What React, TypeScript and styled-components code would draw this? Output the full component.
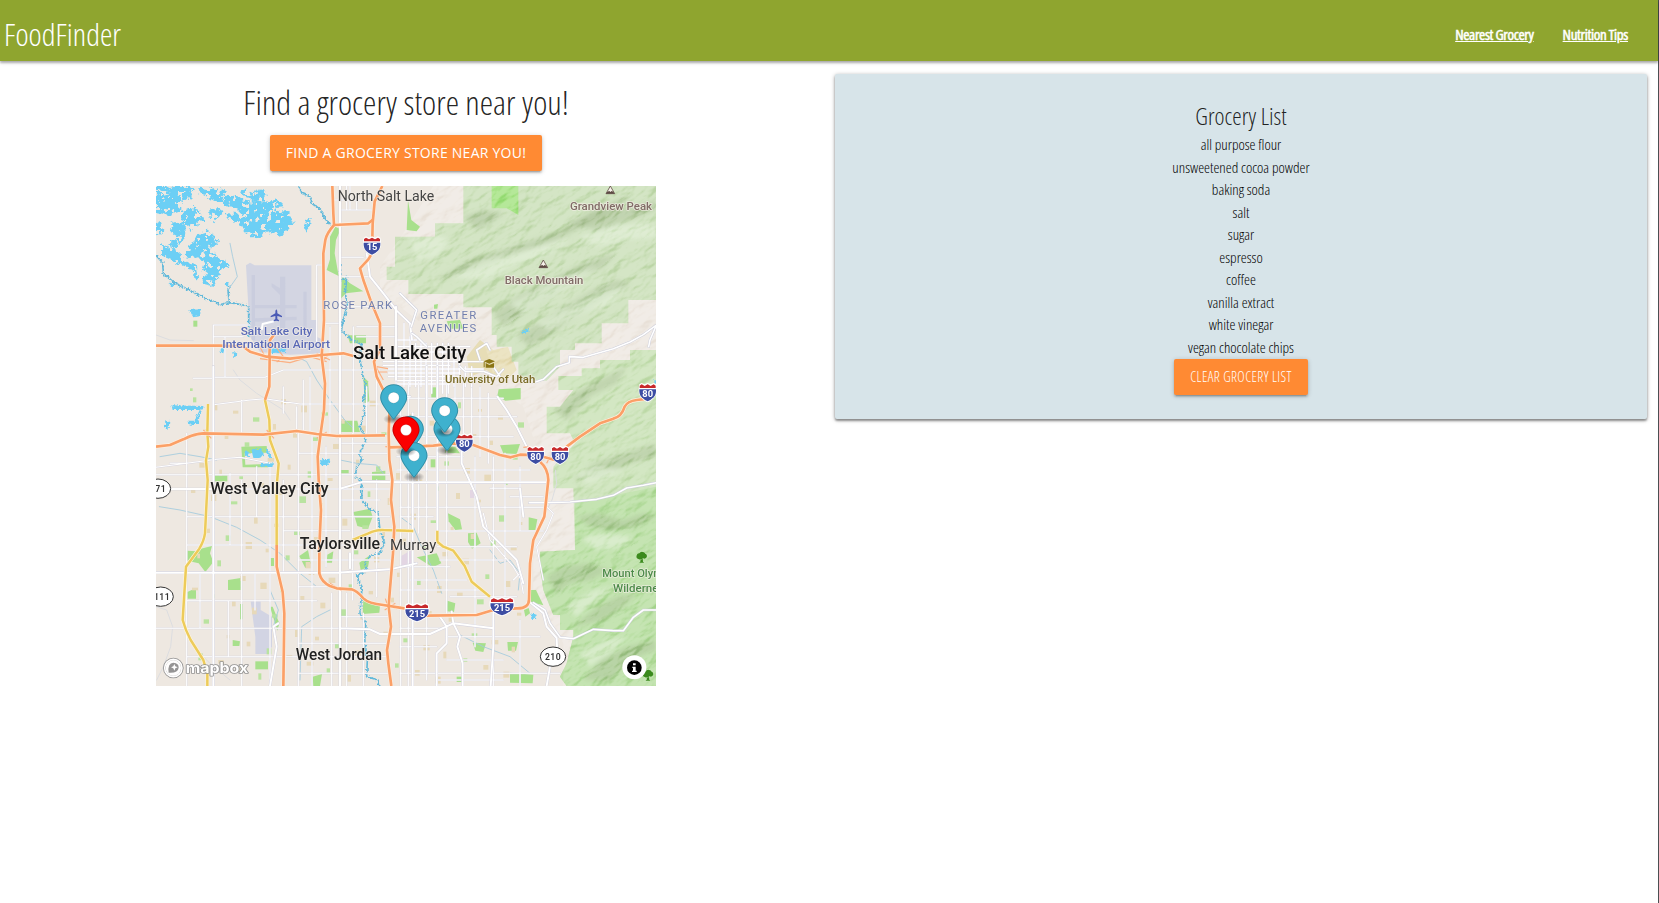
import React from "react";
import styled, { createGlobalStyle } from "styled-components";

const GlobalStyle = createGlobalStyle`
  * { box-sizing: border-box; }
  html, body { margin: 0; padding: 0; }
  body {
    background: #fff;
    color: #000;
    font-family: "Open Sans", "Noto Sans", sans-serif;
    font-stretch: 75%;
    font-weight: 300;
    font-size: 15px;
    line-height: 22.5px;
  }
`;

const Page = styled.div`
  min-height: 903px;
  border-right: 1px solid #4b4f52;
`;
const NavBar = styled.nav`
  display: flex;
  align-items: center;
  justify-content: space-between;
  height: 61px;
  padding: 8px 30px 0 4px;
  background: #8fa52f;
  box-shadow: 0 2px 2px rgba(0, 0, 0, 0.2), 0 1px 4px rgba(0, 0, 0, 0.25);
`;
const Brand = styled.a`
  padding-bottom: 1px;
  color: #fff;
  font-size: 31.4px;
  line-height: 52px;
`;
const NavLinks = styled.div`
  display: flex;
  gap: 29px;
`;
const NavLink = styled.a`
  color: #fff;
  font-size: 15px;
  font-weight: 500;
  letter-spacing: -0.35px;
  text-decoration: underline;
  -webkit-text-stroke: 0.5px #fff;
`;
const Columns = styled.main`
  display: grid;
  grid-template-columns: 812px 812px;
  column-gap: 23px;
  align-items: start;
  padding-top: 13px;
`;
const Finder = styled.section`
  display: flex;
  flex-direction: column;
  align-items: center;
`;
const Title = styled.h1`
  margin: 8px 0 13px;
  color: rgba(0, 0, 0, 0.87);
  font-size: 33.8px;
  font-weight: 300;
  line-height: 40px;
  white-space: nowrap;
`;
const Button = styled.button<{ $wide?: boolean }>`
  height: 36px;
  width: ${(p) => (p.$wide ? 272 : 134)}px;
  padding: 0;
  border: 0;
  border-radius: 2px;
  background: #ff8a33;
  color: #fff;
  font-family: "Open Sans", "Noto Sans", sans-serif;
  font-stretch: ${(p) => (p.$wide ? "100%" : "75%")};
  font-weight: ${(p) => (p.$wide ? 400 : 350)};
  font-size: 14px;
  line-height: 36px;
  letter-spacing: ${(p) => (p.$wide ? 0.25 : 0.4)}px;
  text-transform: uppercase;
  white-space: nowrap;
  box-shadow: 0 2px 2px rgba(0, 0, 0, 0.14), 0 3px 1px -2px rgba(0, 0, 0, 0.12), 0 1px 5px rgba(0, 0, 0, 0.2);
`;
const MapFrame = styled.div`
  width: 500px;
  height: 500px;
  margin-top: 15px;
  overflow: hidden;
  svg { display: block; }
`;
const Panel = styled.section`
  display: flex;
  flex-direction: column;
  align-items: center;
  height: 345px;
  padding-top: 25px;
  border-radius: 2px;
  background: #d7e4e9;
  box-shadow: 0 2px 2px rgba(0, 0, 0, 0.3), 0 1px 4px rgba(0, 0, 0, 0.35);
`;
const PanelTitle = styled.h2`
  margin: 0;
  color: rgba(0, 0, 0, 0.87);
  font-size: 23.8px;
  font-weight: 300;
  line-height: 34px;
`;
const List = styled.ul`
  margin: 0 0 1px;
  padding: 0;
  list-style: none;
  text-align: center;
`;
const Item = styled.li`
  line-height: 22.5px;
`;

const groceries = [
  "all purpose flour",
  "unsweetened cocoa powder",
  "baking soda",
  "salt",
  "sugar",
  "espresso",
  "coffee",
  "vanilla extract",
  "white vinegar",
  "vegan chocolate chips",
];

/* Map drawing: three units to one pixel. */
const FOREST_N =
  "M940 18V130H855V170H735V260H710V300H775V342H940V382H1025V465H1040V500H1085V545H1105V600L1190 602L1230 560V510H1275V490H1355V430H1435V360H1518V18Z";
const FOREST_E =
  "M1518 510H1440V540H1350V565H1295V588H1225V630H1270L1230 680H1190V760H1260L1275 790L1210 860V925H1270L1275 1110L1170 1115V1160L1180 1230L1210 1305H1230V1350H1270V1370L1250 1450L1230 1490L1250 1518H1518Z";
const FOREST_SE =
  "M1518 920L1275 970V1110L1170 1115V1160L1180 1230L1210 1305H1230V1350H1270V1370L1250 1450L1230 1490L1250 1518H1518Z";

const lake = [
  "M18 34L50 40L62 24L92 18H124L132 40L108 62L84 70L98 90L72 100L54 108L18 100Z",
  "M18 18H60L66 28L50 36L18 28Z",
  "M142 22L186 30L206 24L228 38L214 52L226 70L204 66L176 50L152 44Z",
  "M104 88L138 80L150 98L162 118L142 134L122 148L100 136L92 118Z",
  "M64 128L92 124L108 146L104 170L92 196L76 170L64 156Z",
  "M18 122L34 128L40 154L18 172Z",
  "M62 176L80 182L88 200L66 204L60 190Z",
  "M178 88L206 84L222 96L206 108L196 124L178 112Z",
  "M222 46L254 44L276 62L304 68L338 64L372 78L386 98L418 96L432 130L414 150L396 168L346 152L334 170L306 172L276 144L262 120L280 112L268 90L240 76L222 84Z",
  "M234 100L258 102L268 118L252 128L232 118Z",
  "M282 26L306 38L336 24L350 44L340 60L312 68L294 50L276 44Z",
  "M352 60L384 62L402 82L380 84L356 74Z",
  "M470 116L482 112L480 146L470 156L462 142Z",
  "M36 190L66 206L88 222L98 238L120 250L138 256L142 300L130 290L128 270L102 264L80 248L52 236L36 222Z",
  "M110 198L134 184L148 156L170 152L192 166L204 188L182 202L178 220L200 218L206 240L232 236L236 260L212 266L206 290L188 318L162 312L156 300L170 282L158 272L164 246L138 232L116 238L104 222Z",
];
const water = [
  "M58 308L74 310L72 320L56 318Z",
  "M226 306L236 306L234 320L224 316Z",
  "M118 390L152 388L150 408L130 412Z",
  "M64 676L160 678L160 690L68 690Z",
  "M110 722L134 722L150 688L152 690L144 730L120 734Z",
  "M46 724L58 722L56 746L44 744Z",
  "M212 505L222 506L220 520L212 520Z",
  "M360 505L410 506L404 516L360 520Z",
  "M250 516L262 518L260 530L252 530Z",
  "M304 808L335 806L342 828L310 834Z",
  "M284 816L300 812L296 830L286 830Z",
  "M350 805L366 832L358 834L346 812Z",
  "M510 838L540 836L534 854L512 856Z",
  "M330 852L368 850L368 860L330 860Z",
  "M1112 454L1136 446L1134 458L1118 462Z",
  "M1508 602L1518 600V612Z",
  "M1144 1300L1160 1306L1158 1318L1146 1316Z",
];
const rivers = [
  "M18 226L38 248L40 280L70 306L110 326L160 352L210 374L240 368L296 378V470",
  "M238 368L234 330L240 318",
  "M446 18L456 40L480 50L488 72L514 90L522 112L540 134",
  "M570 250L574 300L590 292L586 340L592 376L580 420L574 452L602 476L636 494L630 540L640 590L648 620L640 660L644 700L630 740",
  "M630 740L648 780L628 822L636 840L620 862L616 892L634 900L636 960L658 986L684 1000L690 1050L704 1088L690 1118L660 1130L644 1150L650 1170L622 1186L626 1204L636 1220L630 1300L648 1330L644 1380L652 1440L650 1490L684 1500L686 1518",
];
const canals = [
  "M234 330L262 290L248 230L240 190",
  "M28 980L90 990L180 1010L260 1042L330 1080L390 1120L450 1180L500 1220",
  "M440 530L470 545L500 600L540 660L584 720L610 745",
  "M30 830L90 820L150 830L200 840",
  "M570 840L620 850L680 855L700 880",
  "M450 1500L455 1340L500 1310L540 1290",
  "M750 1010L790 1040L815 1100L850 1170L875 1240",
  "M1020 1110L1050 1150L1080 1140L1110 1180L1105 1230",
  "M930 1365L1000 1400L1080 1430L1140 1480",
  "M360 1230L385 1290L370 1340",
];
const parks = [
  "M540 170L556 140L572 148L558 180L554 220L566 288L530 270L540 238Z",
  "M576 288L600 310L640 334L588 340L572 356Z",
  "M592 466H648V490H600Z",
  "M640 590L654 604L658 664L644 670Z",
  "M572 722H622L630 756H572Z",
  "M774 60L784 120L810 140L800 154L770 150Z",
  "M274 800L350 798L352 818L284 820L286 854L352 852L354 862H278Z",
  "M610 996L660 986L668 1010L654 1046L622 1038Z",
  "M146 1108L186 1098L180 1120L190 1146L166 1176L146 1150L112 1142V1112L140 1114Z",
  "M234 1200L272 1194V1230H234Z",
  "M112 1236L138 1224L138 1256H112Z",
  "M448 1128L474 1110L482 1150L466 1164Z",
  "M640 1258L690 1278L688 1298L638 1302Z",
  "M628 1148L660 1126L654 1162L632 1170Z",
  "M666 876L706 872V900H666Z",
  "M194 886H232V904H194Z",
  "M316 1444H354V1468H316Z",
  "M488 1490L516 1482L510 1518H490Z",
  "M894 1000L930 1018L936 1048L916 1050L896 1024Z",
  "M954 1060L980 1058L992 1090L966 1106L954 1086Z",
  "M800 1132L860 1120L874 1150L848 1162Z",
  "M1142 1230L1158 1230L1180 1276L1142 1266Z",
  "M892 1262L916 1270L912 1296L890 1294Z",
  "M1050 796L1110 792L1100 822L1060 820Z",
  "M1136 1012L1162 1018L1156 1050L1136 1050Z",
  "M968 1388L1008 1390L1000 1416L976 1412Z",
  "M1080 1478L1150 1484L1148 1510L1080 1508Z",
  "M1072 1386L1104 1386L1098 1412H1074Z",
  "M844 622H858V656H844Z",
  "M1046 628L1112 624V658L1066 662L1042 648Z",
  "M982 600L994 586L996 604Z",
  "M842 838H856V862H842Z",
  "M888 800L916 800L930 820L884 818Z",
  "M570 870H596V880H570Z",
  "M532 1124L550 1114L546 1148L530 1148Z",
  "M360 1134H372V1158H360Z",
  "M360 1280L368 1280L388 1330L382 1352Z",
  "M920 1490H936V1506H920Z",
  "M130 422H142V440H130Z",
  "M890 424L930 420L940 446L900 446Z",
  "M852 374L864 372L862 386H852Z",
  "M270 1272H278V1318H270Z",
  "M248 1380L270 1384L268 1398H248Z",
  "M1122 1290L1136 1284L1140 1300L1126 1310Z",
];
const minorStreets =
  "M190 435H300M190 470H280M190 435V1518M275 660V762M360 860V1518M110 760V1518M275 900V1518M190 592H345L400 570H690M190 674L300 660L345 656L450 672H690M225 470V590M60 850H110M130 595L190 595" +
  "M500 255V500M540 440V760M480 590V760M440 680V760M400 620V700M460 600V760M610 440V760M650 620V760M680 560V760M738 430V760" +
  "M18 862L110 850L200 838L270 832L360 850M18 884H720M18 927H720M110 1010H720M110 1095H600M18 1178H460M110 1262H500M18 1345H570M110 1430H716" +
  "M445 760V1518M486 760V1518M528 800V1160M608 760V1260M400 900V1180M240 880V1095M320 860V1010M150 1180V1345M235 1262V1430M315 1180V1290M545 1240V1518M590 1240V1518M680 900V1250M640 1300V1518" +
  "M445 820H720M570 790H720M570 960H690M400 1052H600M445 1140H720M445 1220H530M570 1310H720M570 1390H720M445 1390H570M445 1480H716" +
  "M752 620V1518M775 600V1518M806 600V1060M830 600V1500M890 610V1300M915 600V760M940 600V760M965 600V790M990 620V830M1015 640V850M1030 830V1518M1065 820V1250M1110 860V1050M975 830V1400M1110 1320V1518" +
  "M740 655H1060M740 710H1100M740 770H1090M740 830H940M740 870H1140M750 982H1180M750 1010H850M862 1053H1180M862 1100H1100M870 1140H1060M750 1160H900M780 1200H950M750 1230H1000M900 1250H1100M750 1345H890M890 1370H1170M750 1400H860M890 1440H1060M750 1480H1230M1020 925H1110M1080 950H1180M860 1500H1060" +
  "M570 232H640M570 290H660M580 380H740M620 440H740M620 470H740M570 90H665M590 18V90M620 40V90M550 60H660M600 18V90M520 430H570M500 255H520" +
  "M1090 1200L1110 1180L1120 1240M1180 970L1210 1000L1190 1050L1160 1100L1180 1200M1000 1000L1020 1080L1090 1160L1120 1210";
const majorStreets =
  "M570 18V1518M190 560V1518M18 927H190M18 1178H560L720 1168L800 1150M568 927L640 905L790 907H1190M788 700V1518M862 560V1052M830 560V870M600 1165L600 1120M750 650H780" +
  "M738 380V600M650 220L660 290L700 340L740 392L780 430L786 480M570 1345L660 1348L690 1362H840L910 1330L905 1295M910 1330L1030 1345M1030 1290V1400L1022 1518M910 1330L930 1370L922 1400L938 1450V1518M870 1310L890 1340V1390L860 1420V1518" +
  "M935 810V850L980 950L1000 1040L1100 1140L1120 1210M1042 650L1070 690L1100 740L1130 800M1138 1265L1180 1300L1190 1340L1220 1374L1222 1420M1190 1518L1200 1460M1120 1010L1110 925M360 1518L380 1400L370 1340L385 1330";
const downtown =
  "M700 545H1000M700 556H900M715 567H1000M715 579H930M715 590H930M740 602H920M740 612H900M738 480H800M745 500H960M750 516H940M762 430V620M780 470V620M797 490V620M813 490V620M828 490V640M845 490V640M862 490V640M878 490V640M895 490V640M912 500V620M928 500V600M946 560V620M965 560V620";
const canyonRoads =
  "M1150 608L1180 598L1220 560L1258 548V530L1300 532L1390 506L1440 486L1480 464L1518 436M1518 438L1500 480L1496 500M930 560L946 574L1000 574L1040 590L1060 568M1030 560L1050 590M980 510L1010 490L1020 510M980 510L990 540" +
  "M1138 968H1190L1260 966L1340 958L1390 946L1430 924L1480 916L1518 908M1150 1268L1185 1290L1200 1330L1230 1372L1270 1376L1330 1348L1390 1352L1420 1352L1450 1312L1480 1290L1518 1290M784 440L800 390L750 340M786 460L800 470L830 500";
const trails =
  "M18 465L60 480L130 482M250 570L270 600L320 640L400 690L420 720M1216 870L1220 910L1206 960L1180 1010M18 1280L50 1290L68 1340L62 1400L40 1460L20 1500M130 1400L180 1450L240 1500";

const orange = [
  "M697 18L674 64L668 130L666 220L655 238L630 265L640 300L665 370L690 430V510L672 545L680 590L705 640L718 700L716 760L718 840L727 900L723 960L733 1040L729 1120L718 1250L716 1280L723 1340L711 1410L715 1450L724 1518",
  "M547 18L550 100L552 135Q530 160 526 180L520 220L522 420L515 530L525 610L522 690L512 760L503 830L506 900L513 990L508 1100V1180Q514 1205 540 1218L560 1225L605 1228Q620 1232 640 1255Q655 1270 700 1275L763 1285L830 1307L980 1305L1030 1290L1100 1285Q1138 1286 1137 1256L1140 1150L1150 1080L1183 1010L1195 900Q1194 865 1170 845",
  "M552 135L655 130L670 118",
  "M18 497H210L280 500L300 515L350 530L420 536L515 525L580 520L610 528",
  "M358 532L360 480L374 462",
  "M359 530L358 620L345 660",
  "M380 1095V1160L398 1236L403 1300L400 1518",
  "M18 800L60 795L100 778Q130 762 160 760L340 764L440 753L500 762L560 768L705 766",
  "M718 802L790 800L850 797L910 790L970 795L1050 825L1082 832L1110 824L1160 825L1215 840L1250 800L1290 770L1350 730L1390 716Q1415 710 1424 680Q1432 664 1460 660L1495 656",
];
const yellow = [
  "M174 672L172 760L175 800L168 842L173 900L165 1060Q162 1082 148 1106L108 1160L98 1320Q106 1350 122 1380L160 1440L172 1480V1518",
  "M345 660L358 720L360 780L386 850L380 920V1096",
  "M608 1080L655 1060Q680 1048 700 1050L790 1053",
  "M862 1052V1085L880 1100L910 1112L944 1158L965 1205L1020 1250",
];
const interchange = [
  "M345 530L330 500L376 498L400 530L380 546M330 536L420 548L480 530L530 545M500 520L540 540M515 545L540 520",
  "M680 560L714 566M684 576L712 576M672 550L700 600M706 800L740 802",
  "M690 1270L740 1286M706 1256L720 1296M704 1290L736 1270",
  "M1120 802L1140 800L1150 820M1190 850L1200 830",
  "M160 750L184 775M350 750L372 775M500 775L530 756M540 1210L575 1232",
];

const ridgesDark = [
  "M860 300L960 240L1060 210L1150 180L1240 150L1330 90L1400 60L1440 50L1400 90L1300 140L1200 190L1100 225L980 270Z",
  "M940 110L1000 90L1060 100L1020 130L980 150Z",
  "M1030 400L1100 350L1180 310L1260 270L1330 240L1400 220L1360 260L1280 300L1200 350L1120 400L1060 440Z",
  "M1100 470L1180 420L1260 370L1330 330L1400 300L1440 310L1360 360L1280 410L1200 460L1140 500Z",
  "M1250 130L1350 90L1440 80L1518 60V90L1440 120L1340 150Z",
  "M1210 690L1270 640L1350 600L1430 560L1400 610L1320 650L1250 720Z",
  "M1270 900L1330 850L1420 820L1518 790V830L1440 850L1350 890Z",
  "M1280 1010L1340 1000L1420 1020L1480 1000L1518 1010L1460 1040L1380 1050L1320 1040Z",
  "M1190 1190L1240 1160L1320 1150L1380 1170L1320 1200L1260 1210L1220 1240Z",
  "M1270 1340L1330 1290L1400 1250L1460 1240L1420 1280L1360 1320Z",
  "M1300 1500L1350 1440L1430 1400L1518 1380V1410L1440 1440L1380 1500Z",
];
const ridgesLight = [
  "M780 180L850 160L900 180L860 230L800 240Z",
  "M900 290L1000 240L1110 215L1190 190L1260 180L1200 220L1100 250L1000 300Z",
  "M1080 370L1180 320L1270 280L1340 260L1280 310L1200 350L1120 400Z",
  "M1160 430L1260 380L1340 340L1420 320L1380 370L1300 400L1200 450Z",
  "M1290 170L1380 140L1480 130L1518 140V170L1430 180L1340 200Z",
  "M1280 880L1340 860L1420 870L1380 890L1310 910Z",
  "M1290 1070L1370 1060L1450 1070L1420 1100L1340 1110Z",
  "M1250 1280L1330 1230L1390 1220L1330 1270L1280 1310Z",
  "M1290 1420L1370 1380L1430 1370L1380 1420L1320 1460Z",
];

type LabelSpec = { t: string; x: number; y: number; w: number; s?: number; c?: string; b?: number };
const labels: LabelSpec[] = [
  { t: "North Salt Lake", x: 563, y: 64, w: 290, s: 44, c: "#444", b: 400 },
  { t: "Grandview Peak", x: 1260, y: 91, w: 246, c: "#806c66" },
  { t: "Black Mountain", x: 1064, y: 313, w: 236, c: "#806c66" },
  { t: "Salt Lake City", x: 272, y: 465, w: 215, c: "#5868b6" },
  { t: "International Airport", x: 217, y: 504, w: 323, c: "#5868b6" },
  { t: "Salt Lake City", x: 609, y: 538, w: 340, s: 55, c: "#111", b: 500 },
  { t: "University of Utah", x: 885, y: 610, w: 271, c: "#7a6c28" },
  { t: "West Valley City", x: 181, y: 942, w: 355, s: 49, c: "#222", b: 500 },
  { t: "Taylorsville", x: 449, y: 1108, w: 241, s: 48, c: "#222", b: 500 },
  { t: "Murray", x: 720, y: 1111, w: 139, s: 45, c: "#3a3a3a", b: 400 },
  { t: "West Jordan", x: 437, y: 1441, w: 259, s: 48, c: "#222", b: 500 },
  { t: "Mount Olympus", x: 1357, y: 1192, w: 236, c: "#4d8b4a" },
  { t: "Wilderness", x: 1389, y: 1235, w: 172, c: "#4d8b4a" },
];
const spacedLabels = [
  { t: "ROSE PARK", x: 520, y: 388, w: 206 },
  { t: "GREATER", x: 811, y: 418, w: 168 },
  { t: "AVENUES", x: 809, y: 457, w: 170 },
];

const MapLabel = ({ t, x, y, w, s = 35, c, b = 500 }: LabelSpec) => (
  <text x={x} y={y} textLength={w} lengthAdjust="spacingAndGlyphs" fontSize={s} fill={c} fontWeight={b}
    stroke="#f4efe8" strokeOpacity=".75" strokeWidth="5" strokeLinejoin="round" paintOrder="stroke">{t}</text>
);

const Shield = ({ x, y, n }: { x: number; y: number; n: string }) => {
  const k = n.length > 2 ? 1.38 : 1;
  return (
    <g transform={`translate(${x} ${y})`}>
      <g transform={`scale(${k} 1)`}>
        <path d="M-25-25L-18-29L-9-25L0-29L9-25L18-29L25-25Q29-8 26 3Q20 20 0 29Q-20 20-26 3Q-29-8-25-25Z" fill="#fff" />
        <path d="M-25-10H25Q26 6 18 14Q10 22 0 26Q-10 22-18 14Q-26 6-25-10Z" fill="#3d4da3" />
        <path d="M-24-14V-21L-18-25L-9-20L0-25L9-20L18-25L24-21V-14Z" fill="#c8292b" />
      </g>
      <text y="13" textAnchor="middle" fontSize="28" fontWeight="700" fill="#fff">{n}</text>
    </g>
  );
};

const RouteOval = ({ x, y, n, dx = 0 }: { x: number; y: number; n: string; dx?: number }) => (
  <g transform={`translate(${x} ${y})`}>
    <ellipse rx="38" ry="29" fill="#fff" stroke="#333" strokeWidth="3" />
    <text x={dx} y="9" textAnchor="middle" fontSize="26" fontWeight="600" fill="#333" letterSpacing="1">{n}</text>
  </g>
);

const Pin = ({ x, y, color = "#3fb1ce" }: { x: number; y: number; color?: string }) => (
  <g transform={`translate(${x} ${y}) scale(3) translate(-13.5 -13.5)`}>
    <ellipse cx="13.5" cy="34.8" rx="10.5" ry="5.2" fill="url(#pinShadow)" />
    <path fill={color} d="M27 13.5C27 19.07 20.25 27 14.75 34.5C14.02 35.5 12.98 35.5 12.25 34.5C6.75 27 0 19.22 0 13.5C0 6.04 6.04 0 13.5 0C20.96 0 27 6.04 27 13.5Z" />
    <path fill="none" stroke="#000" strokeOpacity=".2" d="M26.5 13.5C26.5 19 20 26.5 14.35 34.2C13.9 34.8 13.1 34.8 12.65 34.2C7 26.5.5 19 .5 13.5C.5 6.3 6.3.5 13.5.5C20.7.5 26.5 6.3 26.5 13.5Z" />
    <circle cx="13.5" cy="13.5" r="5.5" fill="#fff" stroke="#000" strokeOpacity=".2" strokeWidth=".5" />
  </g>
);

const Peak = ({ x, y }: { x: number; y: number }) => (
  <g transform={`translate(${x} ${y})`}>
    <path d="M0-13L13 10H-13Z" fill="#f6f1ea" stroke="#5d4a43" strokeWidth="2.4" strokeLinejoin="round" />
    <path d="M-9 4L-3 2L0 5L4 2L9 4L13 10H-13Z" fill="#5d4a43" />
  </g>
);

const Tree = ({ x, y }: { x: number; y: number }) => (
  <g transform={`translate(${x} ${y})`} fill="#3b8a1d" stroke="#d7efc8" strokeWidth="2" paintOrder="stroke">
    <path d="M-3 2H3L4 14L8 17H-8L-4 14Z" />
    <path d="M-10 6Q-18 4-15-5Q-13-12-7-11Q-3-18 4-15Q9-15 11-10Q18-7 15 1Q11 7 4 4Q-3 10-10 6Z" />
  </g>
);

const MapSvg = styled.svg`
  font-family: Roboto, "Open Sans", sans-serif;
  font-stretch: 100%;
`;
const Hillshade = styled.g`
  mix-blend-mode: soft-light;
`;

const CityMap = () => (
  <MapSvg width="500" height="500" viewBox="18 18 1500 1500" role="img" aria-label="Map of Salt Lake City">
    <defs>
      <clipPath id="forest"><path d={FOREST_N} /><path d={FOREST_E} /></clipPath>
      <clipPath id="hills"><path d="M700 18H1518V1518H1240V1390L1150 1230V1080L1200 930L1120 680L1040 620L1000 480H880L750 380L690 330V260L760 160L850 18Z" /></clipPath>
      <filter id="coast" x="-5%" y="-5%" width="110%" height="110%">
        <feTurbulence type="fractalNoise" baseFrequency=".14" numOctaves="3" seed="4" />
        <feDisplacementMap in="SourceGraphic" scale="13" xChannelSelector="R" yChannelSelector="G" />
      </filter>
      <filter id="islands" x="-5%" y="-5%" width="110%" height="110%">
        <feTurbulence type="fractalNoise" baseFrequency=".06" numOctaves="3" seed="23" result="noise" />
        <feColorMatrix in="noise" type="matrix" values="0 0 0 0 0 0 0 0 0 0 0 0 0 0 0 -30 0 0 0 19.6" result="land" />
        <feDisplacementMap in="SourceGraphic" in2="noise" scale="26" xChannelSelector="G" yChannelSelector="B" result="shore" />
        <feComposite in="shore" in2="land" operator="in" />
      </filter>
      <filter id="relief" x="0" y="0" width="100%" height="100%" colorInterpolationFilters="sRGB">
        <feTurbulence type="fractalNoise" baseFrequency=".015 .032" numOctaves="4" seed="11" result="n" />
        <feColorMatrix in="n" type="matrix" values="0 0 0 0 0 0 0 0 0 0 0 0 0 0 0 1 0 0 0 0" />
        <feDiffuseLighting surfaceScale="20" diffuseConstant="1.12" lightingColor="#fff">
          <feDistantLight azimuth="255" elevation="56" />
        </feDiffuseLighting>
      </filter>
      <radialGradient id="pinShadow">
        <stop offset="0" stopColor="#000" stopOpacity=".5" />
        <stop offset=".5" stopColor="#000" stopOpacity=".27" />
        <stop offset="1" stopColor="#000" stopOpacity="0" />
      </radialGradient>
      <filter id="soft"><feGaussianBlur stdDeviation="6" /></filter>
    </defs>

    <rect x="18" y="18" width="1500" height="1500" fill="#eee8e1" />
    <path d="M288 256L300 248L314 256H484V420H500V470L520 480V520L420 524L330 516L300 470Z" fill="#d3d5e2" />
    <path d="M305 285H315V480H305ZM390 290H406V450H390ZM460 335H470V460H460ZM365 310L390 325V345L365 320ZM315 375H440V385H315ZM315 415L440 410V420L315 425Z" fill="#c5c9dc" opacity=".65" />
    <path d="M302 1264H332V1290L366 1310V1400L352 1422H316V1370Z" fill="#d2d4e3" />
    <path d="M950 530L990 480L1030 510L1074 500L1100 570L1060 610L1010 570L960 590Z" fill="#e7ddb6" />
    <path d="M750 1130L784 1110L786 1150L752 1160ZM960 930H980V954H960Z" fill="#e3d6e3" />

    <path d={FOREST_N} fill="#cadfb8" />
    <path d={FOREST_E} fill="#c9e1b6" />
    <path d={FOREST_SE} fill="#b8dea2" />
    <path d="M1025 18H1105V105L1070 85H1025Z" fill="#a5e284" />
    <g clipPath="url(#forest)">
      <g filter="url(#soft)">
        {ridgesDark.map((d) => <path key={d} d={d} fill="#93ae7d" opacity=".42" />)}
        {ridgesLight.map((d) => <path key={d} d={d} fill="#e0efd4" opacity=".6" />)}
      </g>
    </g>
    <Hillshade clipPath="url(#hills)">
      <g transform="rotate(-32 1100 750)" opacity=".4">
        <rect x="100" y="-300" width="2000" height="2100" filter="url(#relief)" />
      </g>
    </Hillshade>

    {parks.map((d) => <path key={d} d={d} fill="#a8e08c" />)}
    {Array.from({ length: 150 }, (_, i) => {
      const x = 120 + ((i * 347) % 1000);
      const y = 625 + ((i * 521) % 870);
      return <rect key={i} x={x} y={y} width={8 + ((i * 7) % 13)} height={8 + ((i * 11) % 14)}
        fill={i % 3 === 0 ? "#b9e3a0" : "#e7d9b9"} />;
    })}

    <g fill="none" strokeLinejoin="round" strokeLinecap="round">
      <g stroke="#62b9da" strokeWidth="5" filter="url(#coast)">{rivers.map((d) => <path key={d} d={d} />)}</g>
      <g stroke="#a4cbdd" strokeWidth="2.6">{canals.map((d) => <path key={d} d={d} />)}</g>
      <path d={trails} stroke="#dcdde0" strokeWidth="3" />
      <path d={minorStreets} stroke="#d6d4de" strokeWidth="5" />
      <path d={minorStreets} stroke="#fff" strokeWidth="3.2" />
      <path d={downtown} stroke="#d4d2e2" strokeWidth="5.4" />
      <path d={downtown} stroke="#fff" strokeWidth="3.8" />
      <path d={majorStreets} stroke="#cfcedb" strokeWidth="8" />
      <path d={majorStreets} stroke="#fff" strokeWidth="5.8" />
      <path d={canyonRoads} stroke="#cccddb" strokeWidth="7.5" />
      <path d={canyonRoads} stroke="#fff" strokeWidth="4.8" />
    </g>
    <g filter="url(#islands)" fill="#6ccff5">{lake.map((d) => <path key={d} d={d} />)}</g>
    <g filter="url(#coast)" fill="#6ccff5">{water.map((d) => <path key={d} d={d} />)}</g>

    <g fill="none" strokeLinejoin="round">
      {yellow.map((d) => <path key={d} d={d} stroke="#fff6dc" strokeWidth="11" />)}
      {yellow.map((d) => <path key={d} d={d} stroke="#edcb5a" strokeWidth="7.5" />)}
      {interchange.map((d) => <path key={d} d={d} stroke="#fbb083" strokeWidth="3.5" />)}
      {orange.map((d) => <path key={d} d={d} stroke="#fff0e2" strokeWidth="11.5" />)}
      {orange.map((d) => <path key={d} d={d} stroke="#fba067" strokeWidth="8" />)}
      <path d="M335 450L338 432L372 424" stroke="#fff" strokeWidth="6" />
    </g>

    {labels.map((l) => <MapLabel key={l.t + l.y} {...l} />)}
    {spacedLabels.map((l) => (
      <text key={l.t} x={l.x} y={l.y} textLength={l.w} fontSize="34" fontWeight="400" fill="#717fae" stroke="#f4efe8"
        strokeWidth="4" strokeOpacity=".7" paintOrder="stroke">{l.t}</text>
    ))}

    <path d="M379 388Q383 391 382 400L396 408V412L382 408V417L387 421V424L379 422L371 424V421L376 417V408L362 412V408L376 400Q375 391 379 388Z" fill="#4a5ab5" />
    <g fill="#8b7514">
      <path d="M1018 537L1035 544L1018 551L1001 544Z" />
      <path d="M1007 549L1018 555L1032 549V563H1007ZM1001 545H1004V562H1001Z" />
    </g>
    <Peak x={1381} y={31} />
    <Peak x={1180} y={253} />
    <Tree x={1475} y={1131} />
    <Tree x={1494} y={1485} />

    <Shield x={666} y={198} n="15" />
    <Shield x={1493} y={638} n="80" />
    <Shield x={943} y={789} n="80" />
    <Shield x={1157} y={826} n="80" />
    <Shield x={1230} y={826} n="80" />
    <Shield x={801} y={1298} n="215" />
    <Shield x={1056} y={1280} n="215" />
    <RouteOval x={24} y={926} n="171" />
    <RouteOval x={32} y={1250} n="111" dx={4} />
    <RouteOval x={1209} y={1430} n="210" />

    <Pin x={731} y={653} />
    <Pin x={781} y={748} />
    <Pin x={891} y={747} />
    <Pin x={884} y={692} />
    <Pin x={792} y={827} />
    <Pin x={768} y={750} color="#fb0000" />

    <g opacity=".95">
      <circle cx="70" cy="1464" r="27" fill="#aaa" fillOpacity=".6" stroke="#8e8e8e" strokeWidth="8" />
      <circle cx="70" cy="1464" r="26" fill="none" stroke="#fff" strokeWidth="5" />
      <circle cx="70" cy="1464" r="23" fill="#fff" />
      <path d="M56 1478Q52 1449 70 1448Q87 1449 86 1463Q84 1480 56 1478Z" fill="#909090" />
      <path d="M73 1452L76 1459L83 1462L76 1465L73 1472L70 1465L63 1462L70 1459Z" fill="#fff" />
      <text x="107" y="1479" textLength="188" lengthAdjust="spacingAndGlyphs" fontFamily="Inter, sans-serif" fontSize="42"
        fontWeight="700" fill="#fff" stroke="#8e8e8e" strokeWidth="5" strokeLinejoin="round" paintOrder="stroke">mapbox</text>
    </g>
    <circle cx="1453" cy="1462" r="36" fill="#fff" />
    <circle cx="1453" cy="1463" r="22" fill="#000" />
    <path d="M1449 1450H1457V1456H1449ZM1447 1460H1457V1472H1460V1476H1446V1472H1449V1464H1447Z" fill="#fff" />
  </MapSvg>
);

export default function App() {
  return (
    <>
      <GlobalStyle />
      <Page>
        <NavBar>
          <Brand>FoodFinder</Brand>
          <NavLinks>
            <NavLink>Nearest Grocery</NavLink>
            <NavLink>Nutrition Tips</NavLink>
          </NavLinks>
        </NavBar>
        <Columns>
          <Finder>
            <Title>Find a grocery store near you!</Title>
            <Button $wide>Find a grocery store near you!</Button>
            <MapFrame><CityMap /></MapFrame>
          </Finder>
          <Panel>
            <PanelTitle>Grocery List</PanelTitle>
            <List>
              {groceries.map((g) => <Item key={g}>{g}</Item>)}
            </List>
            <Button>Clear Grocery List</Button>
          </Panel>
        </Columns>
      </Page>
    </>
  );
}
